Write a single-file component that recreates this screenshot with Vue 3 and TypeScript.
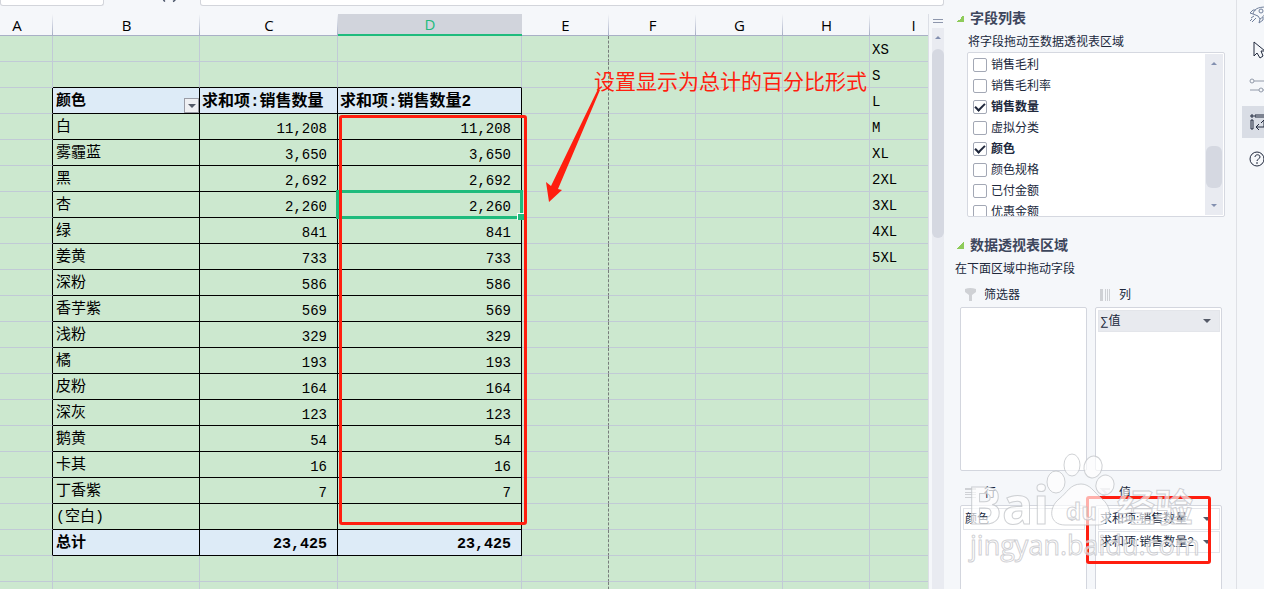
<script setup lang="ts">
import { ref } from 'vue'

interface DataRow {
  label: string
  qty: string
}

interface Field {
  name: string
  checked: boolean
}

const columns: string[] = ['A', 'B', 'C', 'D', 'E', 'F', 'G', 'H', 'I']
const trailing: string[] = ['E', 'F', 'G', 'H', 'I']
const sizes: string[] = ['XS', 'S', 'L', 'M', 'XL', '2XL', '3XL', '4XL', '5XL']

const rows: DataRow[] = [
  { label: '白', qty: '11,208' },
  { label: '雾霾蓝', qty: '3,650' },
  { label: '黑', qty: '2,692' },
  { label: '杏', qty: '2,260' },
  { label: '绿', qty: '841' },
  { label: '姜黄', qty: '733' },
  { label: '深粉', qty: '586' },
  { label: '香芋紫', qty: '569' },
  { label: '浅粉', qty: '329' },
  { label: '橘', qty: '193' },
  { label: '皮粉', qty: '164' },
  { label: '深灰', qty: '123' },
  { label: '鹅黄', qty: '54' },
  { label: '卡其', qty: '16' },
  { label: '丁香紫', qty: '7' },
  { label: '(空白)', qty: '' },
]

const fields = ref<Field[]>([
  { name: '销售毛利', checked: false },
  { name: '销售毛利率', checked: false },
  { name: '销售数量', checked: true },
  { name: '虚拟分类', checked: false },
  { name: '颜色', checked: true },
  { name: '颜色规格', checked: false },
  { name: '已付金额', checked: false },
  { name: '优惠金额', checked: false },
])

const selectedRow = ref(3)

function sideText(col: string, row: number): string {
  return col === 'I' ? sizes[row] ?? '' : ''
}
</script>

<template>
  <div class="app">
    <main class="main">
      <div class="topbar">
        <input class="name-box" type="text" aria-label="名称框" />
        <svg class="fx" width="20" height="6" viewBox="0 0 20 6" aria-hidden="true">
          <path d="M3 -3 Q3 0 5 1.500 M16 -3 Q16 0 13 1.500" fill="none" stroke="#4a5468" stroke-width="1.500" />
        </svg>
        <input class="formula" type="text" aria-label="编辑栏" />
      </div>
      <div class="workspace">
        <div class="sheet">
          <table class="grid">
            <colgroup>
              <col class="w-a" /><col class="w-b" /><col class="w-c" /><col class="w-d" />
              <col v-for="c in trailing" :key="c" class="w-n" />
            </colgroup>
            <thead>
              <tr>
                <th v-for="c in columns" :key="c" scope="col" :class="{ active: c === 'D' }">{{ c }}</th>
              </tr>
            </thead>
            <tbody>
              <tr v-for="r in 2" :key="'t' + r" :class="{ above: r === 2 }">
                <td></td><td></td><td></td><td></td>
                <td v-for="c in trailing" :key="c" :class="{ brk: c === 'E' }">{{ sideText(c, r - 1) }}</td>
              </tr>
              <tr class="pv head">
                <td class="edge"></td>
                <td class="p">
                  <div class="filter-cell">
                    <span class="small">颜色</span>
                    <button type="button" class="drop" aria-label="筛选"><i class="caret"></i></button>
                  </div>
                </td>
                <td class="p">求和项:销售数量</td>
                <td class="p">求和项:销售数量2</td>
                <td v-for="c in trailing" :key="c" :class="{ brk: c === 'E' }">{{ sideText(c, 2) }}</td>
              </tr>
              <tr v-for="(row, i) in rows" :key="row.label" class="pv">
                <td class="edge"></td>
                <td class="p">{{ row.label }}</td>
                <td class="p num">{{ row.qty }}</td>
                <td class="p num" :class="{ selected: i === selectedRow }" @click="selectedRow = i">{{ row.qty }}</td>
                <td v-for="c in trailing" :key="c" :class="{ brk: c === 'E' }">{{ sideText(c, i + 3) }}</td>
              </tr>
              <tr class="pv total">
                <td class="edge"></td>
                <td class="p">总计</td>
                <td class="p num">23,425</td>
                <td class="p num">23,425</td>
                <td v-for="c in trailing" :key="c" :class="{ brk: c === 'E' }"></td>
              </tr>
              <tr v-for="r in 2" :key="'b' + r">
                <td></td><td></td><td></td><td></td>
                <td v-for="c in trailing" :key="c" :class="{ brk: c === 'E' }"></td>
              </tr>
            </tbody>
          </table>
        </div>
        <div class="vscroll">
          <i class="split"></i>
          <div class="track">
            <i class="tri up"></i>
            <i class="thumb"></i>
          </div>
        </div>
      </div>
      <div class="mark-box"></div>
      <p class="mark-text">设置显示为总计的百分比形式</p>
      <svg class="mark-arrow" width="60" height="120" viewBox="0 0 60 120" aria-hidden="true">
        <path d="M58 5 L60 6 L18 105 L22 106 L9 118 L6 98 L11 102 Z" fill="#ff1e0f" />
      </svg>
    </main>

    <aside class="panel">
      <section>
        <h2><i class="fold"></i>字段列表</h2>
        <p class="hint inset">将字段拖动至数据透视表区域</p>
        <div class="field-box">
          <ul class="fields">
            <li v-for="f in fields" :key="f.name">
              <label :class="{ on: f.checked }"><input v-model="f.checked" type="checkbox" />{{ f.name }}</label>
            </li>
          </ul>
          <div class="list-track">
            <i class="tri up"></i>
            <i class="list-thumb"></i>
            <i class="tri down"></i>
          </div>
        </div>
      </section>
      <section class="areas">
        <h2><i class="fold"></i>数据透视表区域</h2>
        <p class="hint">在下面区域中拖动字段</p>
        <div class="zones">
          <div class="zone">
            <h3>
              <svg width="13" height="14" viewBox="0 0 13 14" aria-hidden="true"><path d="M1 1 Q6 -1 12 1 V4 L8 7 V13 H5 V7 L1 4 Z" fill="#cfd1d5" /></svg>
              筛选器
            </h3>
            <div class="well"></div>
          </div>
          <div class="zone">
            <h3>
              <svg width="13" height="14" viewBox="0 0 13 14" aria-hidden="true"><path d="M1 1h3v12h-3z M6 1h1v12h-1z M8 1h1v12h-1z M10 1h1v12h-1z" fill="#cfd1d5" /></svg>
              列
            </h3>
            <div class="well"><button type="button" class="chip filled"><span>∑值</span><i class="caret"></i></button></div>
          </div>
          <div class="zone">
            <h3>
              <svg width="13" height="14" viewBox="0 0 13 14" aria-hidden="true"><path d="M1 2h11v2h-11z M1 6h11v1h-11z M1 8h11v1h-11z M1 11h11v1h-11z" fill="#cfd1d5" /></svg>
              行
            </h3>
            <div class="well"><button type="button" class="chip"><span>颜色</span><i class="caret"></i></button></div>
          </div>
          <div class="zone">
            <h3>
              <svg width="13" height="14" viewBox="0 0 13 14" aria-hidden="true"><path d="M11 3 H3 L7 7 L3 11 H11" fill="none" stroke="#d6d8dc" stroke-width="2" /></svg>
              值
            </h3>
            <div class="well">
              <button type="button" class="chip"><span>求和项:销售数量</span><i class="caret"></i></button>
              <button type="button" class="chip"><span>求和项:销售数量2</span><i class="caret"></i></button>
            </div>
          </div>
        </div>
      </section>
      <div class="mark-values"></div>
      <svg class="watermark" width="250" height="130" viewBox="0 0 250 130" aria-hidden="true">
        <g class="wm-shape">
          <ellipse cx="96" cy="37" rx="9" ry="11" />
          <ellipse cx="112" cy="20" rx="8" ry="11" />
          <ellipse cx="133" cy="22" rx="9" ry="11" transform="rotate(12 133 22)" />
          <ellipse cx="145" cy="40" rx="9" ry="10" transform="rotate(20 145 40)" />
          <path d="M121 39 C130 39 134 47 141 53 C153 62 153 80 138 80 H105 C89 80 88 63 99 54 C107 48 110 39 121 39 Z" />
        </g>
        <text class="wm-big" x="7" y="79">Bai</text>
        <text class="wm-du" x="106" y="75">du</text>
        <text class="wm-cn" x="157" y="76">经验</text>
        <text class="wm-url" x="10" y="110">jingyan.baidu.com</text>
      </svg>
    </aside>

    <nav class="rail" aria-label="任务窗格">
      <button type="button" aria-label="快捷"><svg width="20" height="20" viewBox="0 0 20 20"><path d="M4 10 C5 5 9 3 17 3 C17 8 16 12 11 15 L9 12 Z M4 10 L1 9 L4 6 L7 6 M11 15 L10 19 L14 16 V13 M2 14 L5 12 M3 18 L7 14 M1 17 L3 15" /><circle cx="12" cy="7" r="2" /></svg></button>
      <button type="button" class="dark" aria-label="选择"><svg width="20" height="20" viewBox="0 0 20 20"><path d="M5 2 V16 L8 13 L11 18 L14 16 L12 11 H16 Z" /></svg></button>
      <button type="button" aria-label="属性"><svg class="pale" width="20" height="20" viewBox="0 0 20 20"><circle cx="3" cy="5" r="2" /><path d="M5 5 H19 M1 14 H10 M14 14 H19" /><circle cx="12" cy="14" r="2" /></svg></button>
      <button type="button" class="dark current" aria-label="数据透视表"><svg width="20" height="20" viewBox="0 0 20 20"><path d="M2 3h2v2h-2z M2 8h2v9h-2z M6 3h12v2h-12z M15 9 V15 H8 M10 12 L7 15 L10 18 M12 11 L15 8 L18 11" /></svg></button>
      <button type="button" class="dark" aria-label="帮助"><svg width="20" height="20" viewBox="0 0 20 20"><circle cx="8" cy="11" r="7" /><path d="M6 9 C6 6 11 6 11 9 C11 11 8 11 8 13 M8 14 V16" /></svg></button>
    </nav>
  </div>
</template>

<style>
html,
body {
  margin: 0;
  overflow: hidden;
}
</style>

<style scoped>
* {
  box-sizing: border-box;
}
.app {
  display: flex;
  height: 100vh;
  overflow: hidden;
  background: #f5f7fa;
  color: #20283c;
  font-family: "Liberation Sans", "Noto Sans CJK SC", sans-serif;
}
.main {
  position: relative;
  flex: 1;
  min-width: 0;
  display: flex;
  flex-direction: column;
}
.topbar {
  display: flex;
  height: 14px;
  flex: none;
  align-items: flex-start;
}
.topbar input {
  height: 6px;
  padding: 0;
  border: 1px solid #d3d5db;
  border-top: 0;
  border-radius: 0 0 3px 3px;
  background: #fff;
}
.name-box {
  width: 104px;
}
.fx {
  margin: 0 20px 0 56px;
}
.formula {
  flex: 1;
  margin-right: 1px;
}
.workspace {
  flex: 1;
  min-height: 0;
  display: flex;
}
.sheet {
  flex: 1;
  min-width: 0;
  overflow: hidden;
  background: #cce8cf;
}
.grid {
  width: 976px;
  margin-left: -19px;
  table-layout: fixed;
  border-collapse: separate;
  border-spacing: 0;
  color: #000;
  font: 14px/22px "Liberation Mono", "Noto Sans CJK SC", monospace;
}
.w-a { width: 72px; }
.w-b { width: 147px; }
.w-c { width: 138px; }
.w-d { width: 184px; }
.w-n { width: 87px; }
.grid th {
  height: 22px;
  padding: 0;
  border-bottom: 1px solid #a9b0c6;
  background: linear-gradient(#f5f7fa, #a9b0c6) right / 1px 100% no-repeat #f5f7fa;
  font: 15px/20px "Open Sans", sans-serif;
}
.grid th.active {
  border-bottom: 2px solid #1fbb7d;
  background: #d1d4dc;
  color: #1fbb7d;
}
.grid td {
  height: 26px;
  padding: 3px 2px 0;
  border-right: 1px solid #c1cad6;
  border-bottom: 1px solid #c1cad6;
  white-space: nowrap;
}
.grid td.brk {
  border-right: 1px dashed #777c7b;
}
.grid .above td:nth-child(n + 2):nth-child(-n + 4),
.grid td.p {
  border-bottom-color: #000;
}
.grid td.p,
.grid td.edge {
  border-right-color: #000;
}
.grid td.p {
  font-size: 14px;
}
.grid td.p:nth-child(2) {
  padding-left: 3px;
  font-size: 15px;
}
.grid td.num {
  padding: 5px 10px 0 0;
  line-height: 20px;
  text-align: right;
}
.head td.p,
.total td.p {
  background: #ddebf7;
  font-weight: 700;
}
.grid .head td.p {
  font-size: 16px;
}
.grid .total td.p {
  font-size: 15px;
}
.filter-cell {
  display: flex;
  justify-content: space-between;
  align-items: flex-end;
  height: 22px;
  margin-right: -2px;
}
.small {
  font-size: 15px;
}
.drop {
  display: flex;
  align-items: center;
  justify-content: center;
  width: 15px;
  height: 15px;
  padding: 0;
  border: 1px solid #9a9ca6;
  background: #eff0f3;
}
.caret {
  flex: none;
  border: 4px solid transparent;
  border-top: 4px solid #555a68;
  border-bottom: 0;
}
.selected {
  position: relative;
}
.selected::before {
  content: "";
  position: absolute;
  inset: -2px;
  border: 3px solid #1fbb7d;
}
.selected::after {
  content: "";
  position: absolute;
  right: -3px;
  bottom: -3px;
  width: 6px;
  height: 6px;
  border: 1px solid #fff;
  border-right: 0;
  border-bottom: 0;
  background: #1fbb7d;
}
.vscroll {
  flex: none;
  width: 17px;
  padding: 4px 1px 0 3px;
  border-left: 1px solid #dcdfe6;
  display: flex;
  flex-direction: column;
}
.split {
  width: 10px;
  height: 4px;
  margin: 1px 1px 5px;
  border-top: 1px solid #8e97ad;
  border-bottom: 1px solid #8e97ad;
}
.track {
  flex: 1;
  display: flex;
  flex-direction: column;
  align-items: center;
  padding-top: 8px;
  background: #e9ebf1;
}
.tri {
  flex: none;
  border: 3px solid transparent;
}
.tri.up {
  border-top: 0;
  border-bottom-color: #8390b0;
}
.tri.down {
  border-bottom: 0;
  border-top-color: #8390b0;
}
.thumb {
  width: 12px;
  height: 189px;
  margin-top: 10px;
  border-radius: 6px;
  background: #d5d8e1;
}
.mark-box {
  position: absolute;
  left: 339px;
  top: 115px;
  width: 188px;
  height: 410px;
  border: 3px solid #ff1e0f;
  border-radius: 3px;
}
.mark-text {
  position: absolute;
  left: 594px;
  top: 67px;
  margin: 0;
  color: #ff1e0f;
  font-size: 21px;
  line-height: 30px;
  white-space: nowrap;
}
.mark-arrow {
  position: absolute;
  left: 540px;
  top: 84px;
}
.panel {
  position: relative;
  flex: none;
  width: 292px;
  padding: 8px 12px 0 10px;
  border-right: 1px solid #dfe1e6;
}
h2 {
  display: flex;
  align-items: center;
  gap: 5px;
  margin: 0 0 0 2px;
  color: #3d465c;
  font-size: 14px;
  line-height: 20px;
}
.fold {
  width: 7px;
  height: 7px;
  background: linear-gradient(135deg, transparent 50%, #8ecb5a 50%);
  outline: 0;
  margin-right: 1px;
}
.hint {
  margin: 4px 0 0;
  font-size: 12px;
  line-height: 20px;
}
.inset {
  margin-left: 13px;
}
.field-box {
  display: flex;
  height: 165px;
  margin: 0 -1px 0 12px;
  padding: 1px;
  border: 1px solid #d5d8e0;
  border-radius: 2px;
  background: #fff;
  overflow: hidden;
}
.fields {
  flex: 1;
  margin: 0;
  padding: 1px 0 0 4px;
  list-style: none;
  font-size: 12px;
  line-height: 21px;
}
.fields label {
  display: flex;
  align-items: flex-start;
  gap: 4px;
}
.fields label.on {
  font-weight: 700;
}
.fields input {
  appearance: none;
  display: grid;
  place-items: center;
  width: 14px;
  height: 14px;
  margin: 3px 0 0;
  border: 1px solid #a3a8b5;
  border-radius: 2px;
  background: #fff;
}
.fields input:checked::before {
  content: "";
  width: 8px;
  height: 4px;
  margin-bottom: 2px;
  border-left: 2px solid #20283c;
  border-bottom: 2px solid #20283c;
  transform: rotate(-45deg);
}
.list-track {
  width: 18px;
  display: flex;
  flex-direction: column;
  align-items: center;
  padding: 8px 0;
  background: #e9ebf1;
}
.list-thumb {
  width: 16px;
  height: 42px;
  margin: 81px 0 16px;
  border-radius: 6px;
  background: #d5d8e1;
}
.areas {
  margin-top: 18px;
}
.zones {
  display: grid;
  grid-template-columns: 1fr 1fr;
  column-gap: 8px;
  margin: 4px 2px 0 5px;
}
h3 {
  display: flex;
  align-items: center;
  gap: 7px;
  margin: 0;
  padding-left: 4px;
  font-size: 12px;
  font-weight: 400;
  line-height: 24px;
}
.zones .zone:nth-child(n + 3) h3 {
  padding-top: 10px;
}
.well {
  height: 164px;
  padding: 2px 1px 0 2px;
  border: 1px solid #d3d6de;
  border-radius: 2px;
  background: #fff;
}
.chip {
  display: flex;
  align-items: center;
  justify-content: space-between;
  width: 100%;
  height: 22px;
  margin: 0 0 1px;
  padding: 0 8px 0 1px;
  border: 1px solid #e3e5ea;
  background: #fff;
  color: #20283c;
  font: 12px/20px "Liberation Sans", "Noto Sans CJK SC", sans-serif;
  white-space: nowrap;
}
.chip.filled {
  background: #e8eaef;
}
.mark-values {
  position: absolute;
  left: 141px;
  top: 496px;
  width: 125px;
  height: 68px;
  border: 3px solid #ff1e0f;
  border-radius: 3px;
}
.watermark {
  position: absolute;
  left: 15px;
  top: 445px;
  pointer-events: none;
}
.wm-shape,
.watermark text {
  fill: #fff;
  fill-opacity: 0.65;
  stroke: #bfc1c6;
  stroke-opacity: 0.75;
  stroke-width: 1px;
}
.wm-big {
  font: 700 52px "Open Sans", sans-serif;
}
.wm-du {
  font: 700 24px "Open Sans", sans-serif;
}
.wm-cn {
  font: 700 38px "Noto Sans CJK SC", sans-serif;
}
.wm-url {
  font: 27px "Open Sans", sans-serif;
}
.rail {
  flex: none;
  width: 27px;
  display: flex;
  flex-direction: column;
  align-items: flex-end;
  gap: 4px;
  overflow: hidden;
}
.rail button {
  flex: none;
  width: 22px;
  height: 32px;
  padding: 0 0 0 7px;
  border: 0;
  background: none;
  overflow: hidden;
}
.rail button:first-child {
  margin-top: -2px;
}
.rail svg {
  display: block;
  fill: none;
  stroke: #71809c;
  stroke-width: 1px;
}
.rail .dark svg {
  stroke: #20283c;
}
.rail .pale {
  stroke: #929aa9;
}
.rail .current {
  background: #d9dde5;
}
</style>
